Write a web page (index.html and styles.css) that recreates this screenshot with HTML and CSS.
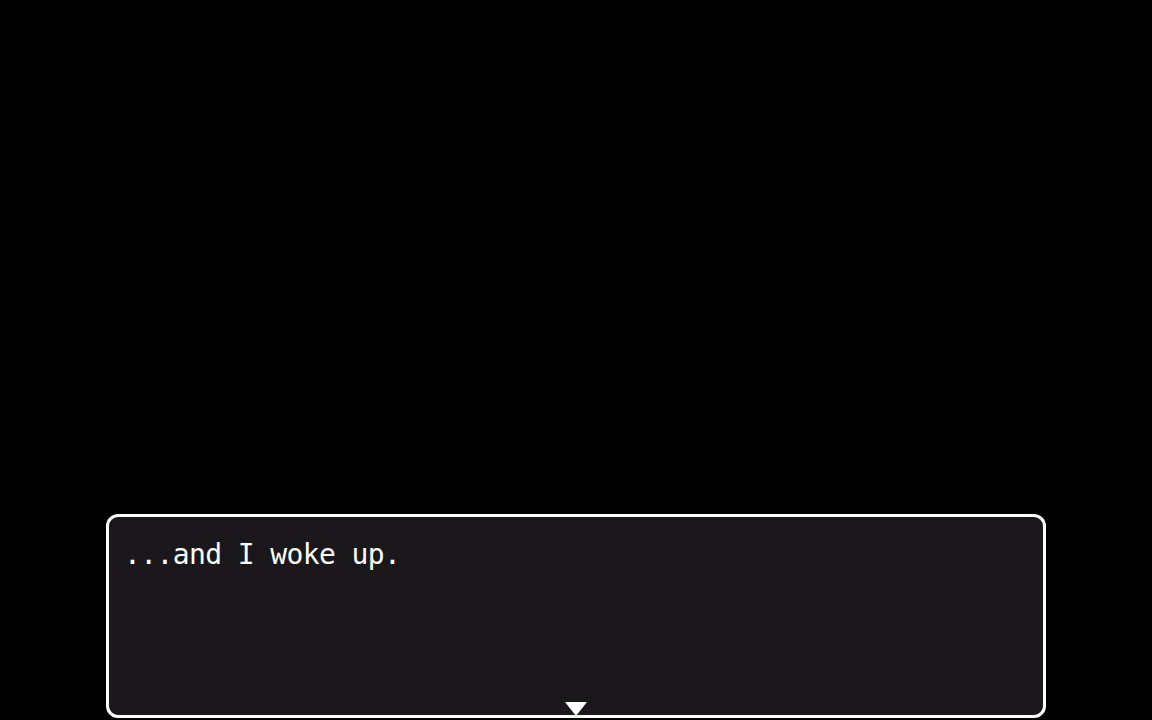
FILE: index.html
```html
<!DOCTYPE html>
<html>
<head>
<title>Message</title>
<link rel="stylesheet" href="styles.css">
</head>
<body>
  <div class="scene">
    <div class="message-window">
      <p class="message-text">...and I woke up.</p>
      <div class="pause-sign"></div>
    </div>
  </div>
</body>
</html>
```

FILE: styles.css
```css
* {
  margin: 0;
  padding: 0;
  box-sizing: border-box;
}

html, body {
  height: 100%;
  overflow: hidden;
}

body {
  background-color: #000000;
  font-family: "DejaVu Sans Mono", "Liberation Mono", monospace;
}

.scene {
  height: 720px;
  display: flex;
  flex-direction: column;
  justify-content: flex-end;
  align-items: center;
  padding-bottom: 2px;
}

.message-window {
  position: relative;
  width: 940px;
  height: 204px;
  margin-left: 0;
  border: 3px solid #ffffff;
  border-radius: 12px;
  background-color: #1a181b;
  padding: 20px 15px;
}

.message-text {
  color: #ffffff;
  font-size: 28px;
  line-height: 36px;
  letter-spacing: -0.6px;
}

.pause-sign {
  position: absolute;
  left: 50%;
  bottom: -1px;
  transform: translateX(-50%);
  width: 0;
  height: 0;
  border-left: 11px solid transparent;
  border-right: 11px solid transparent;
  border-top: 14px solid #ffffff;
}
```
